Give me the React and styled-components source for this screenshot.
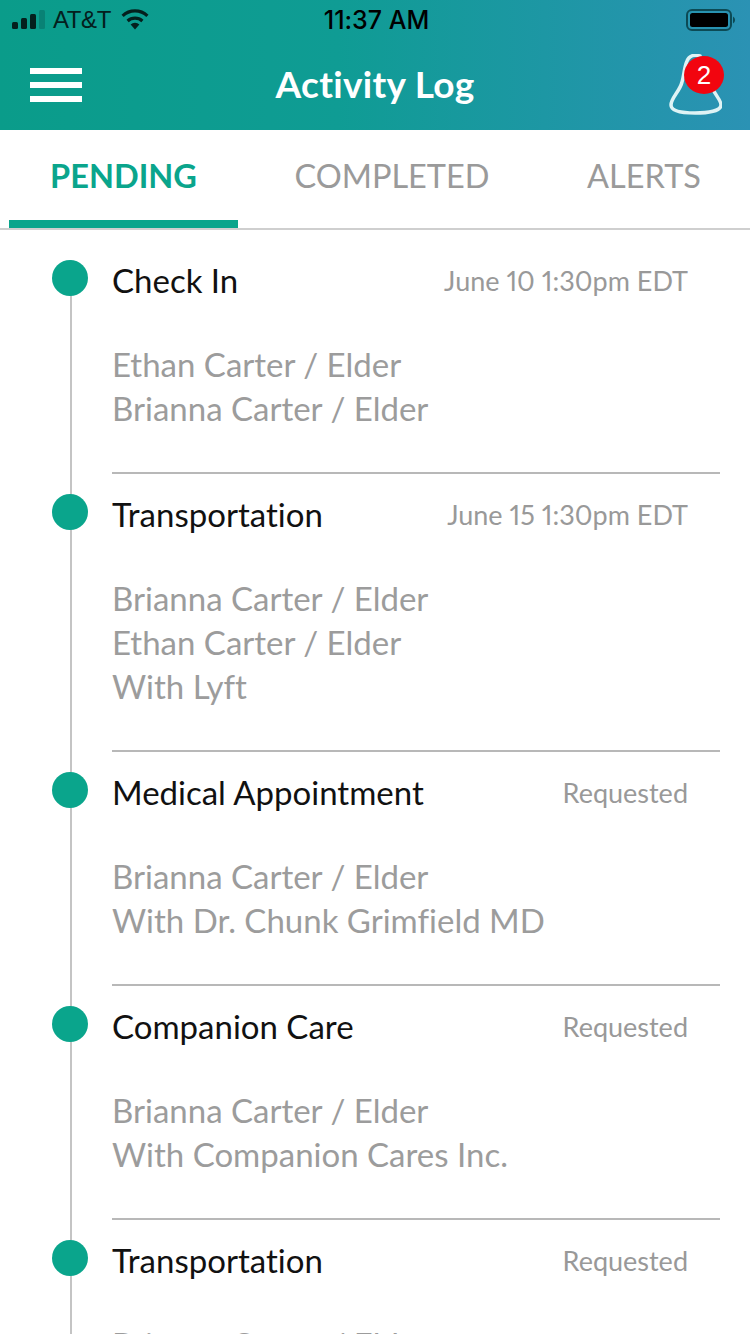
import styled, { createGlobalStyle } from 'styled-components';

const GlobalStyle = createGlobalStyle`
  html, body {
    margin: 0;
    padding: 0;
    background: #fff;
  }
  * {
    box-sizing: border-box;
  }
`;

const Page = styled.div`
  width: 750px;
  height: 1334px;
  overflow: hidden;
  background: #fff;
  font-family: Lato, "Open Sans", sans-serif;
  font-variant-ligatures: none;
`;

const Header = styled.header`
  height: 130px;
  background: linear-gradient(90deg, #0a9c8a 0%, #0f9c94 45%, #2b92b4 100%);
`;

const StatusBar = styled.div`
  height: 40px;
  padding: 0 14px 0 12px;
  display: grid;
  grid-template-columns: 1fr auto 1fr;
  align-items: center;
  font-family: "Liberation Sans", sans-serif;
  font-size: 24px;
  color: #04201d;
`;

const Carrier = styled.div`
  display: flex;
  align-items: center;
  gap: 7px;
  letter-spacing: -0.4px;
`;

const Wifi = styled.svg`
  margin-left: 2px;
`;

const Clock = styled.div`
  margin-left: 5px;
  font-family: Inter, sans-serif;
  font-size: 25px;
  font-weight: 500;
  color: #000;
`;

const Battery = styled.svg`
  justify-self: end;
`;

const NavBar = styled.div`
  height: 90px;
  padding: 0 28px 0 30px;
  display: flex;
  align-items: center;
  justify-content: space-between;
  position: relative;
`;

const Burger = styled.div`
  width: 52px;
  display: flex;
  flex-direction: column;
  gap: 8px;
`;

const BurgerBar = styled.span`
  height: 6px;
  background: #fff;
`;

const Title = styled.h1`
  margin: -4px 0 0;
  font-size: 37px;
  font-weight: 700;
  letter-spacing: 0.3px;
  color: #fff;
  position: absolute;
  left: 0;
  right: 0;
  text-align: center;
`;

const BellWrap = styled.div`
  position: relative;
  width: 54px;
  height: 62px;
`;

const Badge = styled.span`
  position: absolute;
  top: 2px;
  left: 16px;
  width: 40px;
  height: 38px;
  border-radius: 50%;
  background: #f2050f;
  color: #fff;
  font-family: "Liberation Sans", sans-serif;
  font-size: 26px;
  line-height: 38px;
  text-align: center;
`;

const Tabs = styled.nav`
  height: 100px;
  padding-left: 9px;
  display: grid;
  grid-template-columns: 229px 308px 196px;
  border-bottom: 2px solid #cfcfcf;
`;

const Tab = styled.div`
  height: 98px;
  padding-top: 25px;
  font-size: 32.5px;
  line-height: 42px;
  text-align: center;
  font-weight: ${(p) => (p.$active ? 700 : 400)};
  color: ${(p) => (p.$active ? '#0aa58c' : '#9a9a9a')};
  border-bottom: ${(p) => (p.$active ? '8px solid #0aa58c' : 'none')};
`;

const List = styled.ul`
  list-style: none;
  margin: 0;
  padding: 10px 0 0 52px;
  position: relative;

  &::before {
    content: '';
    position: absolute;
    left: 70px;
    top: 30px;
    bottom: 0;
    width: 2px;
    background: #c4c4c4;
  }
`;

const Item = styled.li`
  display: flex;
  gap: 24px;
  position: relative;
`;

const Dot = styled.span`
  width: 36px;
  height: 36px;
  flex: none;
  margin-top: 20px;
  border-radius: 50%;
  background: #0aa58c;
`;

const Body = styled.div`
  flex: 1;
  margin-right: 30px;
  padding: 18px 32px 42px 0;
  border-bottom: 2px solid #b8b8b8;
`;

const TitleRow = styled.div`
  display: flex;
  justify-content: space-between;
  align-items: center;
  height: 44px;
`;

const ItemTitle = styled.div`
  font-size: 33px;
  color: #111;
`;

const When = styled.div`
  font-size: 27px;
  font-variant-numeric: proportional-nums;
  color: #999;
`;

const Lines = styled.div`
  margin-top: 40px;
`;

const Line = styled.div`
  font-size: 33px;
  line-height: 44px;
  color: #9c9c9c;
  white-space: nowrap;
`;

const items = [
  {
    title: 'Check In',
    when: 'June 10 1:30pm EDT',
    lines: ['Ethan Carter / Elder', 'Brianna Carter / Elder'],
  },
  {
    title: 'Transportation',
    when: 'June 15 1:30pm EDT',
    lines: ['Brianna Carter / Elder', 'Ethan Carter / Elder', 'With Lyft'],
  },
  {
    title: 'Medical Appointment',
    when: 'Requested',
    lines: ['Brianna Carter / Elder', 'With Dr. Chunk Grimfield MD'],
  },
  {
    title: 'Companion Care',
    when: 'Requested',
    lines: ['Brianna Carter / Elder', 'With Companion Cares Inc.'],
  },
  {
    title: 'Transportation',
    when: 'Requested',
    lines: ['Brianna Carter / Elder'],
  },
];

function App() {
  return (
    <Page>
      <GlobalStyle />
      <Header>
        <StatusBar>
          <Carrier>
            <svg width="34" height="20" viewBox="0 0 34 20">
              <rect x="0" y="12" width="6" height="7" rx="1.5" fill="#04201d" />
              <rect x="9" y="8" width="6" height="11" rx="1.5" fill="#04201d" />
              <rect x="18" y="4" width="6" height="15" rx="1.5" fill="#04201d" />
              <rect x="27" y="0" width="6" height="19" rx="1.5" fill="#04201d" opacity="0.2" />
            </svg>
            <span>AT&amp;T</span>
            <Wifi width="30" height="22" viewBox="0 0 30 22">
              <path d="M15 20.5 10.6 15.4a6.6 6.6 0 0 1 8.8 0Z" fill="#04201d" />
              <path d="M7.6 12a11 11 0 0 1 14.8 0" fill="none" stroke="#04201d" strokeWidth="3.2" />
              <path d="M2.6 6.8a18 18 0 0 1 24.8 0" fill="none" stroke="#04201d" strokeWidth="3.2" />
            </Wifi>
          </Carrier>
          <Clock>11:37 AM</Clock>
          <Battery width="50" height="22" viewBox="0 0 50 22">
            <rect x="1" y="1" width="44" height="20" rx="5" fill="none" stroke="#0c4a55" strokeWidth="2" />
            <rect x="4" y="4" width="38" height="14" rx="2.5" fill="#000" />
            <path d="M47 7.5a4 4 0 0 1 0 7Z" fill="#0c4a55" />
          </Battery>
        </StatusBar>
        <NavBar>
          <Burger>
            <BurgerBar />
            <BurgerBar />
            <BurgerBar />
          </Burger>
          <Title>Activity Log</Title>
          <BellWrap>
            <svg width="54" height="62" viewBox="0 0 54 62">
              <path
                d="M32 2C26 0 21 2 19 7c-3 7-3 15-5 21C12 37 3 44 3 51c0 6 11 8 24 8s26-2 26-8c0-5-6-10-8-16"
                fill="none"
                stroke="#dff3f5"
                strokeWidth="3.5"
                strokeLinecap="round"
              />
            </svg>
            <Badge>2</Badge>
          </BellWrap>
        </NavBar>
      </Header>
      <Tabs>
        <Tab $active>PENDING</Tab>
        <Tab>COMPLETED</Tab>
        <Tab>ALERTS</Tab>
      </Tabs>
      <List>
        {items.map((item, i) => (
          <Item key={i}>
            <Dot />
            <Body>
              <TitleRow>
                <ItemTitle>{item.title}</ItemTitle>
                <When>{item.when}</When>
              </TitleRow>
              <Lines>
                {item.lines.map((line) => (
                  <Line key={line}>{line}</Line>
                ))}
              </Lines>
            </Body>
          </Item>
        ))}
      </List>
    </Page>
  );
}

export default App;
